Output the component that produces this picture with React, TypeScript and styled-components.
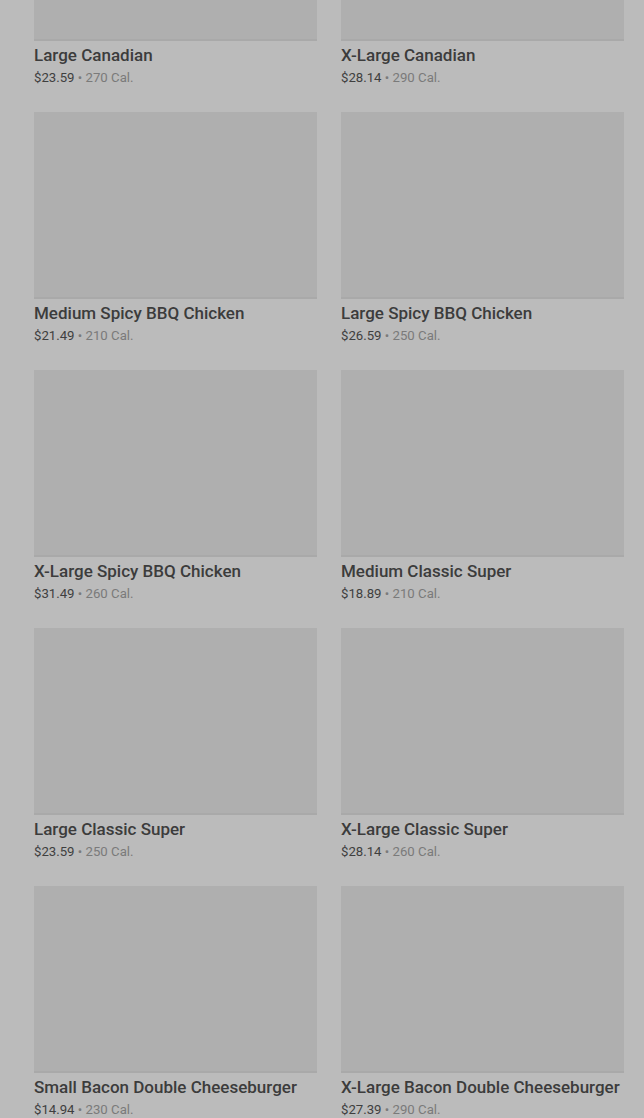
import React from "react";
import styled, { createGlobalStyle } from "styled-components";

const Global = createGlobalStyle`
  html, body { margin: 0; padding: 0; background: #bbbbbb; }
  body { font-family: Roboto, "Noto Sans", Arial, sans-serif; overflow: hidden; }
`;

const Page = styled.div`
  width: 644px;
  height: 1118px;
  overflow: hidden;
  background: #bbbbbb;
`;

const Grid = styled.div`
  margin-top: -146px;
  padding: 0 20px 0 34px;
  display: grid;
  grid-template-columns: 283px 283px;
  column-gap: 24px;
  row-gap: 25px;
`;

const Card = styled.div`
  display: flex;
  flex-direction: column;
`;

const Thumb = styled.div`
  height: 187px;
  background: #afafaf;
  box-shadow: inset 0 -2px 0 rgba(0, 0, 0, 0.03);
`;

const Title = styled.div`
  margin-top: 4px;
  font-size: 17px;
  line-height: 20px;
  font-weight: 500;
  color: #3c3c3c;
  white-space: nowrap;
`;

const Meta = styled.div`
  margin-top: 4px;
  font-size: 13.2px;
  line-height: 18px;
  color: #7a7a7a;
  white-space: nowrap;
`;

const Price = styled.span`
  color: #3f3f3f;
`;

type Item = { name: string; price: string; cal: number };

const items: Item[] = [
  { name: "Large Canadian", price: "$23.59", cal: 270 },
  { name: "X-Large Canadian", price: "$28.14", cal: 290 },
  { name: "Medium Spicy BBQ Chicken", price: "$21.49", cal: 210 },
  { name: "Large Spicy BBQ Chicken", price: "$26.59", cal: 250 },
  { name: "X-Large Spicy BBQ Chicken", price: "$31.49", cal: 260 },
  { name: "Medium Classic Super", price: "$18.89", cal: 210 },
  { name: "Large Classic Super", price: "$23.59", cal: 250 },
  { name: "X-Large Classic Super", price: "$28.14", cal: 260 },
  { name: "Small Bacon Double Cheeseburger", price: "$14.94", cal: 230 },
  { name: "X-Large Bacon Double Cheeseburger", price: "$27.39", cal: 290 },
];

export default function App() {
  return (
    <Page>
      <Global />
      <Grid>
        {items.map((it) => (
          <Card key={it.name}>
            <Thumb />
            <Title>{it.name}</Title>
            <Meta>
              <Price>{it.price}</Price> • {it.cal} Cal.
            </Meta>
          </Card>
        ))}
      </Grid>
    </Page>
  );
}
